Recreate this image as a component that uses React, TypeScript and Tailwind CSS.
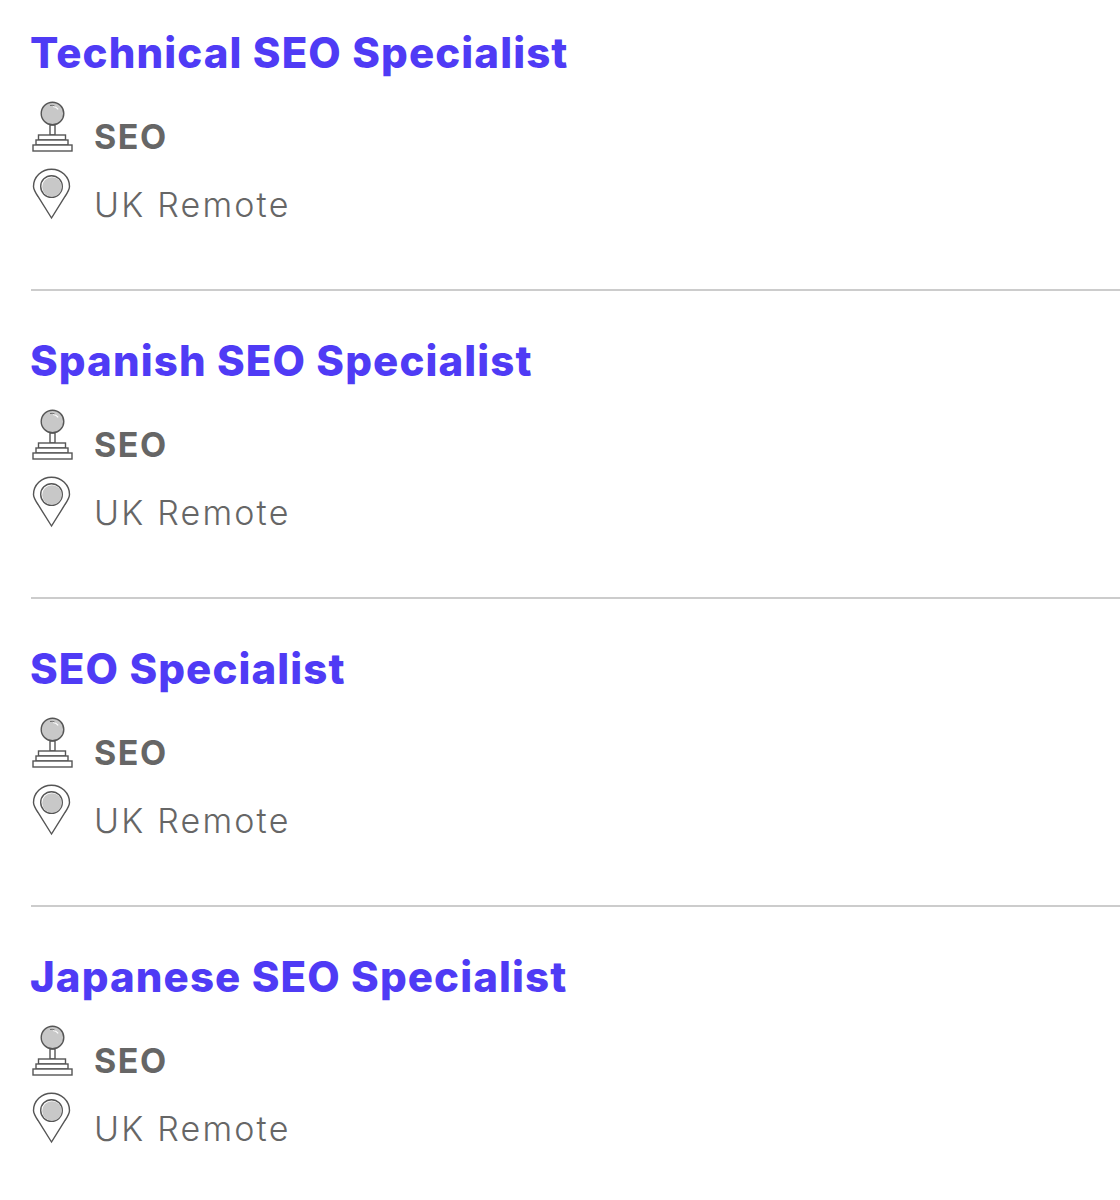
import React from 'react'

const jobs = ['Technical SEO Specialist', 'Spanish SEO Specialist', 'SEO Specialist', 'Japanese SEO Specialist']

function JoystickIcon() {
  return (
    <svg width="42" height="52" viewBox="0 0 42 52" fill="none" stroke="#555" strokeWidth="1.4" className="shrink-0">
      <rect x="18" y="25" width="5" height="10" fill="#fff" />
      <circle cx="20.500" cy="13.500" r="11.300" fill="#c8c8c8" />
      <path d="M21 6.500c2.200 .2 4 1.200 5.200 2.800" stroke="#fff" strokeWidth="1.200" />
      <path d="M18 5.500c1.500-.3 3-.2 4.500 .3" stroke="#555" strokeWidth="0.800" />
      <rect x="6.500" y="35" width="27" height="5" fill="#fff" />
      <rect x="4" y="40" width="32" height="5" fill="#fff" />
      <rect x="1" y="45" width="39" height="6" fill="#fff" />
    </svg>
  )
}

function PinIcon() {
  return (
    <svg width="42" height="52" viewBox="0 0 42 52" fill="none" stroke="#555" className="shrink-0">
      <path d="M19.500 50 L6 28.500 C3 24 1.500 21.500 1.500 18.500 C1.500 9 9.500 1.200 19.500 1.200 C29.500 1.200 37.500 9 37.500 18.500 C37.500 21.500 36 24 33 28.500 Z" strokeWidth="1.400" fill="#fff" />
      <circle cx="19.500" cy="18.500" r="10.800" fill="#fff" strokeWidth="1.400" />
      <circle cx="20" cy="19" r="9.800" fill="#c8c8c8" stroke="none" />
    </svg>
  )
}

export default function App() {
  return (
    <div className="min-h-[1200px] bg-white pl-[31px] font-['Inter','Open_Sans',sans-serif] overflow-hidden">
      {jobs.map((title, i) => (
        <div key={title} className={i < jobs.length - 1 ? 'mb-[17px] h-[291px] border-b-2 border-[#cccccc]' : 'h-[291px]'}>
          <h2 className="-ml-px pt-[26px] text-[42px] leading-[54px] font-extrabold text-[#4f3bf5] tracking-[1.1px] whitespace-nowrap">{title}</h2>
          <div className="mt-[20px] flex h-[52px] items-start pl-[1px]">
            <JoystickIcon />
            <span className="ml-[20px] mt-[17px] text-[34px] leading-[40px] font-bold tracking-[1.6px] text-[#666666]">SEO</span>
          </div>
          <div className="mt-[16px] flex h-[52px] items-start pl-[1px]">
            <PinIcon />
            <span className="ml-[20px] mt-[17px] text-[34px] leading-[40px] font-light tracking-[2.2px] text-[#666666]">UK Remote</span>
          </div>
        </div>
      ))}
    </div>
  )
}
